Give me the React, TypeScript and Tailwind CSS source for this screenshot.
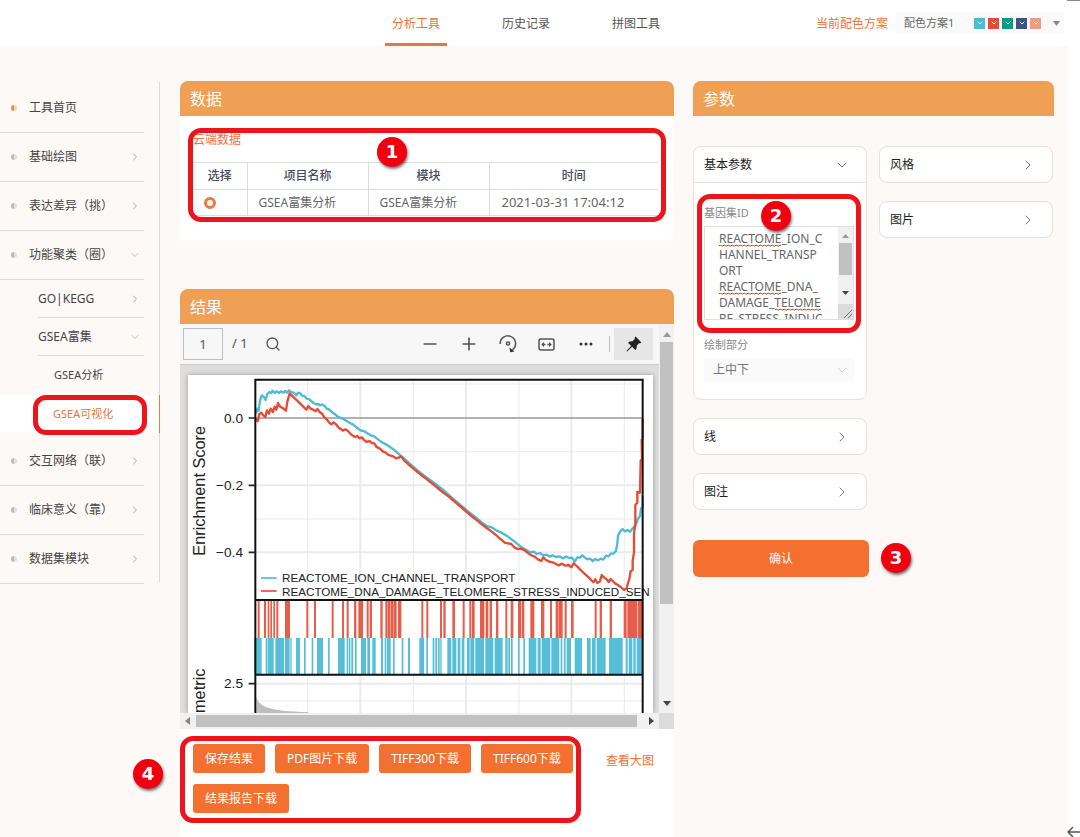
import { useState } from 'react';
import type { ReactNode } from 'react';
import { ChevronDown, ChevronRight, Minus, Plus, Search } from 'lucide-react';

const SWATCHES = [
  'bg-[#4dbbd5]',
  'bg-[#e64b35]',
  'bg-[#00a087]',
  'bg-[#3c5488]',
  'bg-[#f39b7f]',
];

// [start, width] of every gene tick
const RED_TICKS = [
  [233, 6], [252, 6], [263, 5], [271, 5], [280, 5], [289, 6], [315, 15],
  [379, 6], [402, 6], [455, 6], [486, 6], [500, 6], [522, 7], [535, 14],
  [560, 6], [569, 7], [601, 7], [616, 7], [624, 7], [632, 7], [640, 10],
  [654, 10], [724, 6], [739, 6], [780, 6], [790, 7], [817, 8], [848, 6],
  [868, 6], [876, 8], [900, 13], [917, 8], [929, 7], [948, 7], [976, 6],
  [992, 8], [1014, 10], [1026, 7], [1051, 12], [1083, 10], [1110, 6],
  [1127, 7], [1135, 13], [1154, 6], [1173, 8], [1244, 6], [1259, 7],
  [1289, 7], [1331, 9], [1342, 29], [1373, 15],
];

const BLUE_TICKS = [
  [223, 22], [257, 5], [263, 18], [286, 26], [315, 14], [331, 4], [348, 12],
  [372, 5], [395, 5], [411, 18], [444, 5], [474, 20], [500, 5], [507, 4],
  [514, 5], [525, 5], [543, 15], [562, 8], [577, 10], [603, 6], [614, 5],
  [621, 11], [639, 5], [665, 5], [684, 6], [718, 14], [739, 5], [758, 5],
  [766, 5], [774, 5], [781, 4], [802, 12], [817, 12], [833, 8], [845, 8],
  [861, 8], [871, 12], [886, 26], [916, 24], [944, 24], [976, 7], [985, 5],
  [993, 5], [1014, 5], [1030, 5], [1046, 23], [1073, 9], [1085, 26],
  [1114, 24], [1142, 5], [1152, 5], [1160, 13], [1184, 22], [1221, 11],
  [1236, 11], [1250, 27], [1287, 41], [1337, 6], [1346, 11], [1360, 7],
  [1370, 18],
];

const BLUE_CURVE =
  '228,130 233,115 236,122 240,92 245,76 251,80 257,90 262,72 268,66 274,69 278,62 284,69 290,64 297,69 303,64 310,68 316,63 321,68 327,61 334,66 341,68 349,76 354,68 361,70 366,77 373,78 380,86 388,88 395,94 401,99 408,103 414,102 420,106 427,103 434,108 440,116 447,118 455,126 463,131 471,138 480,143 490,147 500,153 510,159 520,164 530,172 541,181 551,183 561,189 572,196 583,199 594,208 606,217 618,223 630,231 642,239 654,250 668,262 682,274 696,287 710,299 724,310 738,321 752,331 766,341 780,352 794,363 808,376 822,389 836,400 850,412 864,424 878,435 892,446 906,458 920,468 935,472 950,482 965,488 980,497 995,508 1010,520 1025,532 1040,541 1050,547 1062,545 1070,552 1080,549 1090,556 1100,554 1110,560 1118,556 1128,561 1138,559 1148,565 1158,560 1168,564 1176,563 1184,575 1192,562 1200,563 1207,556 1214,562 1222,568 1230,566 1238,573 1246,567 1254,571 1262,566 1270,569 1278,557 1286,559 1292,551 1300,551 1308,543 1312,520 1314,497 1320,485 1328,477 1334,484 1342,480 1350,485 1358,475 1364,469 1370,458 1374,446 1380,438 1383,415 1388,411 1388,380';

const RED_CURVE =
  '226,146 233,154 238,132 244,128 250,136 256,141 261,121 267,131 272,116 279,126 284,110 289,119 294,99 300,110 308,114 318,122 322,95 329,70 336,77 345,86 354,94 363,103 372,112 379,119 385,108 392,116 399,119 406,124 412,117 419,126 427,132 433,142 440,148 447,157 454,163 461,157 468,163 475,172 482,177 489,182 496,178 503,182 510,190 518,197 526,201 532,198 538,205 546,202 552,210 560,216 568,213 576,219 583,220 590,231 600,236 608,244 616,247 624,254 632,257 640,259 648,265 656,263 664,259 672,271 684,282 696,292 710,304 724,315 738,326 752,337 766,348 780,360 794,371 808,381 822,393 836,405 850,417 864,429 878,441 892,452 906,463 920,474 934,484 948,495 960,506 974,518 984,520 994,522 1004,533 1014,537 1024,536 1034,541 1044,549 1054,556 1064,560 1074,568 1084,573 1090,562 1098,570 1108,575 1120,578 1128,582 1136,586 1146,581 1156,587 1166,585 1174,592 1181,580 1190,588 1200,598 1210,608 1220,617 1230,626 1240,637 1246,628 1252,639 1260,634 1265,615 1272,622 1280,628 1286,636 1292,627 1298,633 1306,641 1314,645 1322,651 1332,660 1340,655 1344,638 1348,628 1352,604 1358,600 1358,572 1362,548 1362,490 1366,462 1366,405 1372,398 1372,366 1380,368 1382,272 1386,268 1385,210 1388,206 1388,146';

interface MenuEntry {
  label: string;
  icon: 'none' | 'right' | 'down';
  active?: boolean;
}

const MENU_TOP: MenuEntry[] = [
  { label: '工具首页', icon: 'none', active: true },
  { label: '基础绘图', icon: 'right' },
  { label: '表达差异（挑）', icon: 'right' },
  { label: '功能聚类（圈）', icon: 'down' },
];

const MENU_SUB: MenuEntry[] = [
  { label: 'GO|KEGG', icon: 'right' },
  { label: 'GSEA富集', icon: 'down' },
];

const MENU_BOTTOM: MenuEntry[] = [
  { label: '交互网络（联）', icon: 'right' },
  { label: '临床意义（靠）', icon: 'right' },
  { label: '数据集模块', icon: 'right' },
];

const GENE_SETS = `REACTOME_ION_C
HANNEL_TRANSP
ORT
REACTOME_DNA_
DAMAGE_TELOME
RE_STRESS_INDUC
ED_SENESCENCE`;

function Badge({ n, className }: { n: number; className: string }) {
  return (
    <span
      className={`absolute z-10 flex size-[30px] items-center justify-center rounded-full bg-[#f0000f] font-['DejaVu_Sans',sans-serif] text-[18px] font-bold text-white shadow-[1px_2px_3px_rgba(0,0,0,0.55)] ${className}`}
    >
      {n}
    </span>
  );
}

function Outline({ className }: { className: string }) {
  return (
    <div
      className={`pointer-events-none absolute rounded-[13px] border-[5px] border-[#ed151c] ${className}`}
    />
  );
}

function EntryIcon({ icon }: { icon: MenuEntry['icon'] }) {
  if (icon === 'none') return null;
  if (icon === 'down')
    return <ChevronDown className="size-3 text-[#f5a9a4]" strokeWidth={2} />;
  return <ChevronRight className="size-3 text-[#aaa]" strokeWidth={2} />;
}

function MenuItem({ label, icon, active }: MenuEntry) {
  return (
    <li className="mr-[15px] border-b border-[#dedbd9]">
      <a href="#" className="flex h-12 items-center pr-[3px] pl-[11px]">
        <span
          className={`size-[6px] rounded-full border-l-[3px] ${
            active ? 'border-[#f08a4b] bg-[#fbd2b6]' : 'border-[#bbb] bg-[#e2e0df]'
          }`}
        />
        <span className="ml-3 flex-1">{label}</span>
        <EntryIcon icon={icon} />
      </a>
    </li>
  );
}

function Sidebar() {
  return (
    <nav className="h-[500px] w-40 shrink-0 border-r border-[#dcdad9] pt-[2px] text-[#444]">
      <ul>
        {MENU_TOP.map((entry) => (
          <MenuItem key={entry.label} {...entry} />
        ))}
        <li className="pb-1">
          <ul>
            {MENU_SUB.map((entry) => (
              <li
                key={entry.label}
                className="mr-[15px] ml-[38px] border-b border-[#dedbd9]"
              >
                <a href="#" className="flex h-[37px] items-center pr-[3px]">
                  <span className="flex-1">{entry.label}</span>
                  <EntryIcon icon={entry.icon} />
                </a>
              </li>
            ))}
          </ul>
          <ul className="text-[11px]">
            <li>
              <a href="#" className="flex h-[39px] items-center pl-[54px]">
                GSEA分析
              </a>
            </li>
            <li className="relative -mr-px border-r border-[#e08040] bg-white">
              <a
                href="#"
                className="flex h-[38px] items-center pl-[53px] text-[#f0713c]"
              >
                GSEA可视化
              </a>
              <Outline className="top-0 right-3 left-[33px] h-10" />
            </li>
          </ul>
        </li>
        {MENU_BOTTOM.map((entry) => (
          <MenuItem key={entry.label} {...entry} />
        ))}
      </ul>
    </nav>
  );
}

function Header() {
  return (
    <header className="grid h-[46px] shrink-0 grid-cols-[1fr_auto_1fr] items-stretch bg-white pr-7">
      <nav className="col-start-2 flex gap-12 text-[#555]">
        <a
          href="#"
          className="flex w-[62px] items-center justify-center border-b-[3px] border-[#e07a45] pt-[5px] text-[#f0713c]"
        >
          分析工具
        </a>
        <a href="#" className="flex w-[62px] items-center justify-center pt-[2px]">
          历史记录
        </a>
        <a href="#" className="flex w-[62px] items-center justify-center pt-[2px]">
          拼图工具
        </a>
      </nav>
      <div className="-mr-3 flex items-center justify-end">
        <label htmlFor="scheme" className="pt-[2px] text-[#f0713c]">
          当前配色方案
        </label>
        <div className="ml-2 flex h-[22px] w-[168px] items-center bg-[#fafafa] pl-2">
          <select
            id="scheme"
            className="w-[70px] appearance-none bg-transparent text-[11px] text-[#666] focus:outline-none"
          >
            <option>配色方案1</option>
          </select>
          <span className="flex gap-[3px]">
            {SWATCHES.map((color) => (
              <span
                key={color}
                className={`flex size-[11px] items-center justify-center ${color}`}
              >
                <ChevronDown className="size-2 text-white" strokeWidth={3} />
              </span>
            ))}
          </span>
          <svg className="ml-3 h-[5px] w-[7px]" viewBox="0 0 7 5">
            <path d="M0 0h7L3.5 5z" fill="#888" />
          </svg>
        </div>
      </div>
    </header>
  );
}

function SectionTitle({ children }: { children: ReactNode }) {
  return (
    <h2 className="flex h-[35px] items-center rounded-t-lg bg-[#f0a054] px-[10px] pt-px text-base text-white">
      {children}
    </h2>
  );
}

function DataSection() {
  const [checked, setChecked] = useState(false);
  return (
    <section className="relative h-[160px] rounded-b bg-white">
      <SectionTitle>数据</SectionTitle>
      <div className="px-[13px] pt-4 pr-4">
        <p className="h-[30px] leading-4 text-[#f0713c]">云端数据</p>
        <table className="w-full table-fixed border-collapse text-[#666]">
          <thead className="text-[#444b5a]">
            <tr className="h-[27px] border-y border-[#dcdee2]">
              <th className="w-[54px] border-r border-[#dcdee2] font-medium">选择</th>
              <th className="w-[121px] border-r border-[#dcdee2] font-medium">项目名称</th>
              <th className="w-[121px] border-r border-[#dcdee2] font-medium">模块</th>
              <th className="font-medium">时间</th>
            </tr>
          </thead>
          <tbody>
            <tr className="h-[26px] border-b border-[#dcdee2]">
              <td className="border-r border-[#dcdee2] pl-[11px]">
                <input
                  type="radio"
                  aria-label="选择"
                  className="block size-3 appearance-none rounded-full border-[3px] border-[#f0773f] bg-white"
                  checked={checked}
                  onChange={() => setChecked(true)}
                />
              </td>
              <td className="border-r border-[#dcdee2] pl-[11px]">GSEA富集分析</td>
              <td className="border-r border-[#dcdee2] pl-[11px]">GSEA富集分析</td>
              <td className="pl-3 text-[13px]">2021-03-31 17:04:12</td>
            </tr>
          </tbody>
        </table>
      </div>
      <Outline className="top-[47px] right-2 left-2 h-[94px]" />
      <Badge n={1} className="top-[56px] left-[197px]" />
    </section>
  );
}

function Chart() {
  return (
    <svg
      className="h-[338px] w-[465px] bg-white shadow-[0_0_5px_rgba(0,0,0,0.3)]"
      viewBox="24 15 1395 1014"
      fontFamily="Liberation Sans, sans-serif"
      fill="#222"
    >
      <g stroke="#ebebeb" strokeWidth="3">
        <path d="M383 29V690M700 29V690M1017 29V690M1333 29V690M226 42H1388M226 245H1388M226 447H1388" />
        <path d="M383 914V1030M700 914V1030M1017 914V1030M1333 914V1030M226 993H1388" />
        <path
          strokeWidth="6"
          d="M541 29V690M858 29V690M1174 29V690M226 346H1388M226 547H1388M541 914V1030M858 914V1030M1174 914V1030M226 941H1388"
        />
      </g>
      <path d="M226 144H1388" stroke="#999" strokeWidth="5" />
      <g fill="none" strokeWidth="7" strokeLinejoin="round">
        <polyline points={BLUE_CURVE} stroke="#4dbbd5" />
        <polyline points={RED_CURVE} stroke="#e64b35" />
        <path d="M243 624H290" stroke="#4dbbd5" strokeWidth="5" />
        <path d="M243 663H290" stroke="#e64b35" strokeWidth="5" />
      </g>
      <g fontSize="35">
        <text x="306" y="636">REACTOME_ION_CHANNEL_TRANSPORT</text>
        <text x="306" y="677">REACTOME_DNA_DAMAGE_TELOMERE_STRESS_INDUCED_SEN</text>
      </g>
      <g fill="#e64b35" fillOpacity="0.9">
        {RED_TICKS.map(([x, w]) => (
          <rect key={x} x={x} y="692" width={w} height="112" />
        ))}
      </g>
      <g fill="#4dbbd5" fillOpacity="0.95">
        {BLUE_TICKS.map(([x, w]) => (
          <rect key={x} x={x} y="804" width={w} height="108" />
        ))}
      </g>
      <path d="M229 980C236 1008 262 1024 385 1026V1030H229z" fill="#bdbdbd" />
      <path
        d="M226 1030V29H1388V1030M226 690H1388M226 914H1388"
        fill="none"
        stroke="#111"
        strokeWidth="6"
      />
      <path d="M206 144H226M206 346H226M206 547H226M206 941H226" stroke="#222" strokeWidth="5" />
      <g fontSize="41" textAnchor="end">
        <text x="189" y="158">0.0</text>
        <text x="189" y="360">−0.2</text>
        <text x="189" y="561">−0.4</text>
        <text x="189" y="955">2.5</text>
      </g>
      <g fontSize="49">
        <text transform="translate(75 557) rotate(-90)">Enrichment Score</text>
        <text transform="translate(75 1029) rotate(-90)">metric</text>
      </g>
    </svg>
  );
}

function ToolButton({ label, children }: { label: string; children: ReactNode }) {
  return (
    <button aria-label={label} className="flex h-8 w-[39px] items-center justify-center">
      {children}
    </button>
  );
}

function Toolbar() {
  return (
    <div className="flex h-[41px] items-center border-b border-[#ccc] bg-[#f7f7f7] pr-[6px] pl-[3px] text-[#555]">
      <input
        aria-label="页码"
        defaultValue="1"
        className="h-8 w-10 border border-[#b9c0c0] bg-[#f7f7f7] text-center text-[13px] focus:outline-none"
      />
      <span className="ml-[9px] w-[22px] text-[13px]">/ 1</span>
      <button aria-label="搜索" className="flex size-[38px] items-center justify-center">
        <Search className="size-4" strokeWidth={2} />
      </button>
      <div className="ml-auto flex items-center">
        <ToolButton label="缩小">
          <Minus className="size-5" strokeWidth={2} />
        </ToolButton>
        <ToolButton label="放大">
          <Plus className="size-5" strokeWidth={2} />
        </ToolButton>
        <ToolButton label="旋转">
          <svg className="size-[18px]" viewBox="0 0 18 18" fill="none" stroke="currentColor" strokeWidth="1.5">
            <path d="M1.200 9A7.700 7.700 0 1 1 13.500 14.800" />
            <path d="M10.500 12.500L11.200 17.200L15.500 16.500z" fill="#333" stroke="none" />
            <circle cx="9" cy="8.500" r="1.600" />
          </svg>
        </ToolButton>
        <ToolButton label="适应宽度">
          <svg className="h-[13px] w-[17px]" viewBox="0 0 17 13" fill="none" stroke="currentColor" strokeWidth="1.5">
            <rect x="1" y="1" width="15" height="11" rx="2" />
            <path d="M7.5 6.5H4M9.5 6.5H13" />
            <path d="M6 4L3.2 6.5L6 9zM11 4L13.8 6.5L11 9z" fill="currentColor" stroke="none" />
          </svg>
        </ToolButton>
        <ToolButton label="更多">
          <svg className="h-1 w-[14px]" viewBox="0 0 14 4" fill="#333">
            <circle cx="2" cy="2" r="1.5" />
            <circle cx="7" cy="2" r="1.5" />
            <circle cx="12" cy="2" r="1.5" />
          </svg>
        </ToolButton>
        <span className="mr-1 ml-1 h-4 w-px bg-[#bbb]" />
        <button aria-label="固定" className="flex h-8 w-[39px] items-center justify-center bg-[#e6e6e6]">
          <svg className="size-4" viewBox="0 0 16 16" fill="#222">
            <path d="M9.6 0.6L15.4 6.4L14.2 7.3L13 7.2L10.8 9.6L10.6 12.6L9.3 13.9L6.1 10.8L1.4 15.2L0.6 15.4L0.8 14.6L5.2 9.9L2.1 6.7L3.4 5.4L6.4 5.2L8.8 3L8.7 1.8z" />
          </svg>
        </button>
      </div>
    </div>
  );
}

function Viewer() {
  return (
    <div className="grid grid-cols-[1fr_15px] grid-rows-[389px_16px]">
      <div className="min-w-0 overflow-hidden">
        <Toolbar />
        <div className="flex h-[348px] justify-center bg-[#dedede] pt-[10px] pl-[2px]">
          <Chart />
        </div>
      </div>
      <div className="flex flex-col items-center bg-[#f1f1f1]">
        <svg className="mt-2 h-[5px] w-2" viewBox="0 0 8 5" fill="#999">
          <path d="M0 5h8L4 0z" />
        </svg>
        <div className="mt-[5px] h-[262px] w-[13px] bg-[#c1c1c1]" />
        <svg className="mt-auto mb-[7px] h-[5px] w-2" viewBox="0 0 8 5" fill="#444">
          <path d="M0 0h8L4 5z" />
        </svg>
      </div>
      <div className="flex items-center gap-[6px] bg-[#f1f1f1] px-[5px]">
        <svg className="h-2 w-[5px]" viewBox="0 0 5 8" fill="#888">
          <path d="M5 0v8L0 4z" />
        </svg>
        <div className="mr-[6px] h-3 flex-1 bg-[#c1c1c1]" />
        <svg className="h-2 w-[5px]" viewBox="0 0 5 8" fill="#444">
          <path d="M0 0v8L5 4z" />
        </svg>
      </div>
      <div className="bg-[#dcdcdc]" />
    </div>
  );
}

function ActionButton({ title }: { title: string }) {
  return (
    <button className="h-[29px] rounded-[3px] bg-[#f37031] px-3 whitespace-nowrap text-white">
      {title}
    </button>
  );
}

function ResultSection() {
  return (
    <section className="flex-1 bg-white">
      <SectionTitle>结果</SectionTitle>
      <Viewer />
      <div className="relative flex items-start pt-[15px] pb-6 pl-[13px]">
        <div className="flex w-[385px] flex-wrap gap-x-[10px] gap-y-[11px]">
          <ActionButton title="保存结果" />
          <ActionButton title="PDF图片下载" />
          <ActionButton title="TIFF300下载" />
          <ActionButton title="TIFF600下载" />
          <ActionButton title="结果报告下载" />
        </div>
        <a href="#" className="ml-auto pt-[9px] pr-5 text-[#f0713c]">
          查看大图
        </a>
        <Outline className="top-[7px] left-0 h-[87px] w-[401px]" />
        <Badge n={4} className="top-[30px] -left-[47px]" />
      </div>
    </section>
  );
}

function Collapsed({ title }: { title: string }) {
  return (
    <button className="flex h-[37px] w-full items-center justify-between rounded-lg border border-[#e3e2e1] bg-white pr-4 pl-[10px] text-[#222]">
      {title}
      <ChevronRight className="size-4 text-[#777]" strokeWidth={1.5} />
    </button>
  );
}

function Squiggle({ className }: { className: string }) {
  return (
    <svg className={`absolute h-[3px] ${className}`}>
      <defs>
        <pattern id="wave" width="4" height="3" patternUnits="userSpaceOnUse">
          <path d="M0 2L1 1L3 2L4 2" fill="none" stroke="#e53935" />
        </pattern>
      </defs>
      <rect width="100%" height="3" fill="url(#wave)" />
    </svg>
  );
}

function BasicParams() {
  const [geneSets, setGeneSets] = useState(GENE_SETS);
  return (
    <div className="relative h-[254px] rounded-lg border border-[#e3e2e1] bg-white">
      <button className="flex h-9 w-full items-center justify-between border-b border-[#e3e2e1] pr-4 pl-[10px] text-[#222]">
        基本参数
        <ChevronDown className="size-4 text-[#777]" strokeWidth={1.5} />
      </button>
      <div className="pt-[22px] pr-3 pl-[10px] text-[11px] text-[#888]">
        <label htmlFor="gene-sets" className="block h-[21px] leading-4">
          基因集ID
        </label>
        <div className="relative flex h-[94px] border border-[#e0e0e0]">
          <textarea
            id="gene-sets"
            spellCheck={false}
            className="min-w-0 flex-1 resize-none overflow-hidden pt-1 pl-[14px] text-xs leading-4 whitespace-pre text-[#666] focus:outline-none"
            value={geneSets}
            onChange={(e) => setGeneSets(e.target.value)}
          />
          <div className="flex w-[15px] flex-col items-center bg-[#f1f1f1]">
            <svg className="mt-[7px] h-1 w-[7px]" viewBox="0 0 7 4" fill="#999">
              <path d="M0 4h7L3.500 0z" />
            </svg>
            <div className="mt-[5px] h-8 w-[13px] bg-[#c1c1c1]" />
            <svg className="mt-4 h-1 w-[7px]" viewBox="0 0 7 4" fill="#444">
              <path d="M0 0h7L3.500 4z" />
            </svg>
            <div className="mt-auto flex size-[15px] items-end justify-end bg-[#dcdcdc]">
              <svg className="size-[10px]" viewBox="0 0 10 10" stroke="#777">
                <path d="M1 9L9 1M5 9L9 5" />
              </svg>
            </div>
          </div>
          <Squiggle className="top-[17px] left-[14px] w-[62px]" />
          <Squiggle className="top-[65px] left-[14px] w-[62px]" />
          <Squiggle className="top-[81px] left-[70px] w-[46px]" />
        </div>
        <label htmlFor="part" className="mt-[17px] block leading-4">
          绘制部分
        </label>
        <div className="relative mt-[5px]">
          <select
            id="part"
            className="h-6 w-full appearance-none bg-[#fafafb] pl-[9px] text-xs text-[#777] focus:outline-none"
          >
            <option>上中下</option>
          </select>
          <ChevronDown
            className="pointer-events-none absolute top-1 right-1 size-4 text-[#ccc]"
            strokeWidth={1.5}
          />
        </div>
      </div>
      <Outline className="top-[47px] right-[5px] left-[3px] h-[139px]" />
      <Badge n={2} className="top-[54px] left-[67px]" />
    </div>
  );
}

function ParamsSection() {
  return (
    <section>
      <SectionTitle>参数</SectionTitle>
      <div className="mt-[30px] grid grid-cols-2 items-start gap-3 pr-px">
        <div className="flex flex-col gap-[18px]">
          <BasicParams />
          <Collapsed title="线" />
          <Collapsed title="图注" />
          <div className="relative mt-3 -mr-[2px]">
            <button className="h-[37px] w-full rounded-md bg-[#f37031] text-white">
              确认
            </button>
            <Badge n={3} className="top-[3px] -right-[42px]" />
          </div>
        </div>
        <div className="flex flex-col gap-[18px]">
          <Collapsed title="风格" />
          <Collapsed title="图片" />
        </div>
      </div>
    </section>
  );
}

export default function App() {
  return (
    <div className="relative flex min-h-screen flex-col bg-white font-['Noto_Sans','Noto_Sans_CJK_SC',sans-serif] text-xs">
      <Header />
      <main className="mr-[13px] flex flex-1 items-stretch bg-[#fdf9f7] pt-9">
        <Sidebar />
        <div className="-mt-px grid flex-1 grid-cols-[494fr_361fr] gap-[19px] pr-[13px] pl-5">
          <div className="flex min-w-0 flex-col gap-12">
            <DataSection />
            <ResultSection />
          </div>
          <ParamsSection />
        </div>
      </main>
      <span className="absolute top-0 right-0 h-px w-[13px] bg-[#888]" />
      <svg
        className="absolute right-0 bottom-0 h-[11px] w-[13px]"
        viewBox="0 0 13 11"
        fill="none"
        stroke="#555"
        strokeWidth="1.5"
      >
        <path d="M13 6H1M6 1L1 6L6 11" />
      </svg>
    </div>
  );
}
